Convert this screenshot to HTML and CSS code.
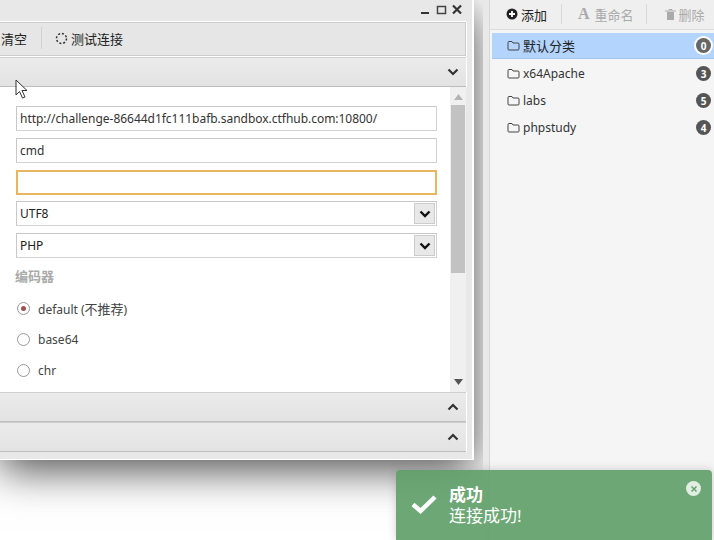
FILE: index.html
```html
<!DOCTYPE html>
<html lang="zh">
<head>
<meta charset="utf-8">
<title>连接</title>
<link rel="stylesheet" href="styles.css">
</head>
<body>
<main class="workspace">
  <section class="window">
    <div class="titlebar">
      <svg class="winicon" width="44" height="12" viewBox="0 0 44 12"><path d="M1 9h8" stroke="#333" stroke-width="2"/><path d="M17.500 2.500h8v7h-8z" fill="none" stroke="#444" stroke-width="1.500"/><path d="M33 1.500l8 8M41 1.500l-8 8" stroke="#333" stroke-width="2.200"/></svg>
    </div>
    <div class="toolbar">
      <span class="tool">清空</span>
      <span class="sep"></span>
      <span class="tool">
        <svg width="13" height="13" viewBox="0 0 13 13"><circle cx="6.500" cy="6.500" r="5" fill="none" stroke="#333" stroke-width="1.500" stroke-dasharray="2 1.900"/></svg>
        测试连接
      </span>
    </div>
    <div class="acc acc-open">
      <svg class="chev" width="12" height="8" viewBox="0 0 12 8"><path d="M1.500 1.500L6 6l4.500-4.500" fill="none" stroke="#333" stroke-width="2.200"/></svg>
    </div>
    <div class="body">
      <div class="form">
        <div class="field">http://challenge-86644d1fc111bafb.sandbox.ctfhub.com:10800/</div>
        <div class="field">cmd</div>
        <div class="field focus"></div>
        <div class="field select">UTF8<span class="selbtn"><svg width="12" height="8" viewBox="0 0 12 8"><path d="M1.500 1.500L6 6l4.500-4.500" fill="none" stroke="#111" stroke-width="2.400"/></svg></span></div>
        <div class="field select">PHP<span class="selbtn"><svg width="12" height="8" viewBox="0 0 12 8"><path d="M1.500 1.500L6 6l4.500-4.500" fill="none" stroke="#111" stroke-width="2.400"/></svg></span></div>
        <div class="label">编码器</div>
        <div class="radio"><span class="dot on"></span><span>default (<span class="cjk">不推荐</span>)</span></div>
        <div class="radio"><span class="dot"></span>base64</div>
        <div class="radio"><span class="dot"></span>chr</div>
      </div>
      <div class="scroll">
        <svg width="9" height="6" viewBox="0 0 9 6"><path d="M4.500 0L9 6H0z" fill="#b4b4b4"/></svg>
        <div class="thumb"></div>
        <svg class="down" width="9" height="6" viewBox="0 0 9 6"><path d="M0 0h9L4.500 6z" fill="#555"/></svg>
      </div>
    </div>
    <div class="acc">
      <svg class="chev" width="12" height="8" viewBox="0 0 12 8"><path d="M1.500 6.500L6 2l4.500 4.500" fill="none" stroke="#333" stroke-width="2.200"/></svg>
    </div>
    <div class="acc">
      <svg class="chev" width="12" height="8" viewBox="0 0 12 8"><path d="M1.500 6.500L6 2l4.500 4.500" fill="none" stroke="#333" stroke-width="2.200"/></svg>
    </div>
  </section>
  <svg class="cursor" width="14" height="21" viewBox="0 0 14 21"><path d="M1 1v15l3.500-3.500L7.500 19l2.500-1-3-6.500h5z" fill="#fff" stroke="#333" stroke-width="1"/></svg>
</main>
<div class="gutter"></div>
<aside class="side">
  <div class="sidebar-tools">
    <span class="stool dark"><svg width="12" height="12" viewBox="0 0 12 12"><circle cx="6" cy="6" r="5.500" fill="#222"/><path d="M6 3v6M3 6h6" stroke="#fff" stroke-width="1.800"/></svg>添加</span>
    <span class="ssep sep-a"></span>
    <span class="stool rename"><b class="aicon">A</b>重命名</span>
    <span class="ssep sep-b"></span>
    <span class="stool"><svg width="11" height="11" viewBox="0 0 11 11"><path d="M0 2h11M4 1.500V.5h3v1" stroke="#aaa" fill="none"/><path d="M2 3h7v8H2z" fill="#aaa"/></svg>删除</span>
  </div>
  <ul class="list">
    <li class="active"><svg class="folder" width="13" height="11" viewBox="0 0 13 11"><path d="M1 9V2.500q0-1 1-1h3l1 1.500h5q1 0 1 1V9q0 1-1 1H2q-1 0-1-1z" fill="none" stroke="#444"/></svg><span class="name cjk">默认分类</span><span class="badge">0</span></li>
    <li><svg class="folder" width="13" height="11" viewBox="0 0 13 11"><path d="M1 9V2.500q0-1 1-1h3l1 1.500h5q1 0 1 1V9q0 1-1 1H2q-1 0-1-1z" fill="none" stroke="#444"/></svg><span class="name">x64Apache</span><span class="badge">3</span></li>
    <li><svg class="folder" width="13" height="11" viewBox="0 0 13 11"><path d="M1 9V2.500q0-1 1-1h3l1 1.500h5q1 0 1 1V9q0 1-1 1H2q-1 0-1-1z" fill="none" stroke="#444"/></svg><span class="name">labs</span><span class="badge">5</span></li>
    <li><svg class="folder" width="13" height="11" viewBox="0 0 13 11"><path d="M1 9V2.500q0-1 1-1h3l1 1.500h5q1 0 1 1V9q0 1-1 1H2q-1 0-1-1z" fill="none" stroke="#444"/></svg><span class="name">phpstudy</span><span class="badge">4</span></li>
  </ul>
</aside>
<div class="toast">
  <svg class="check" width="26" height="20" viewBox="0 0 26 20"><path d="M2 10.500l7.500 6.500L24 3" fill="none" stroke="#fff" stroke-width="4.500"/></svg>
  <div class="toast-text">
    <div class="toast-title">成功</div>
    <div class="toast-msg">连接成功!</div>
  </div>
  <span class="toast-close"><svg width="8" height="8" viewBox="0 0 8 8"><path d="M1.500 1.500l5 5M6.500 1.500l-5 5" stroke="#6a9f70" stroke-width="1.500"/></svg></span>
</div>
</body>
</html>
```

FILE: styles.css
```css
* { box-sizing: border-box; }
html, body { margin: 0; height: 100%; }
body {
  width: 714px;
  height: 540px;
  overflow: hidden;
  display: flex;
  position: relative;
  background: #fff;
  font-family: "Noto Sans", "Open Sans", "Noto Sans CJK SC", sans-serif;
  font-size: 12px;
  color: #333;
}
.cjk { font-size: 13px; }
.workspace {
  width: 483px;
  flex: none;
  position: relative;
  overflow: hidden;
  background: #fff;
}
.window {
  width: 474px;
  height: 460px;
  background: #e8e8e8;
  border-right: 2px solid #fff;
  border-bottom: 1px solid #fff;
  box-shadow: 0 10px 40px rgba(0, 0, 0, .7);
  display: flex;
  flex-direction: column;
  padding-right: 6px;
}
.titlebar {
  height: 22px;
  flex: none;
  display: flex;
  justify-content: flex-end;
  align-items: center;
  padding: 0 4px 9px 0;
  margin-right: -6px;
}
.winicon { flex: none; margin-top: 6px; margin-right: 4px; }
.toolbar {
  height: 34px;
  flex: none;
  display: flex;
  align-items: center;
  gap: 14px;
  padding: 0 0 2px 1px;
  background: #e6e6e6;
  border: 1px solid #ccc;
  border-left: 0;
  box-shadow: 0 -1px 0 #fff, 0 1px 0 #fff, 1px 0 0 #fff;
  color: #222;
  font-size: 13px;
}
.tool { display: flex; align-items: center; gap: 3px; }
.sep { width: 1px; height: 22px; background: #d2d2d2; margin-right: -1px; }
.acc {
  height: 30px;
  flex: none;
  display: flex;
  justify-content: flex-end;
  align-items: center;
  padding-right: 7px;
  background: linear-gradient(#ebebeb, #e3e3e3);
  border-bottom: 1px solid #bdbdbd;
  border-top: 1px solid #cfcfcf;
  box-shadow: 1px 0 0 #fff;
}
.acc-open { margin-top: 1px; }
.body {
  height: 305px;
  flex: none;
  display: flex;
  background: #fff;
  overflow: hidden;
}
.form {
  flex: 1;
  min-width: 0;
  padding: 19px 13px 0 16px;
}
.field {
  height: 25px;
  margin-bottom: 7px;
  border: 1px solid #c8c8c8;
  border-color: #c8c8c8 #d2d2d2 #d2d2d2 #c8c8c8;
  padding-left: 3px;
  display: flex;
  align-items: center;
  justify-content: space-between;
  color: #333;
  font-size: 12px;
  letter-spacing: -.03px;
}
.focus { border: 2px solid #e8b560; margin-bottom: 6px; }
.select { padding-right: 1px; margin-bottom: 7px; color: #222; }
.selbtn {
  width: 21px;
  height: 21px;
  background: #e8e8e8;
  border: 1px solid #ccc;
  display: flex;
  align-items: center;
  justify-content: center;
}
.label {
  height: 21px;
  margin: 2px 0 7px -1px;
  color: #aaa;
  font-weight: 700;
  font-size: 13px;
  display: flex;
  align-items: center;
}
.radio {
  height: 31px;
  display: flex;
  align-items: center;
  gap: 8px;
  padding-left: 1px;
  color: #444;
  font-size: 12px;
}
.dot {
  width: 13px;
  height: 13px;
  border-radius: 50%;
  border: 1px solid #999;
  background: #fff;
  flex: none;
  display: flex;
  align-items: center;
  justify-content: center;
}
.on::after {
  content: "";
  width: 5px;
  height: 5px;
  border-radius: 50%;
  background: #a05050;
}
.scroll {
  width: 16px;
  flex: none;
  background: #f0f0f0;
  display: flex;
  flex-direction: column;
  align-items: center;
  padding-top: 7px;
}
.thumb {
  width: 14px;
  height: 168px;
  margin-top: 5px;
  background: #c2c2c2;
}
.down { margin-top: auto; margin-bottom: 7px; }
.cursor {
  position: absolute;
  left: 15px;
  top: 79px;
}
.gutter {
  width: 6px;
  flex: none;
  background: #e9e9e9;
}
.side {
  flex: 1;
  min-width: 0;
  border-left: 1px solid #d8d8d8;
  background: #f5f5f5;
}
.sidebar-tools {
  height: 30px;
  display: flex;
  align-items: center;
  padding: 0 0 1px 16px;
  background: #efefef;
  border-bottom: 1px solid #ddd;
  color: #aaa;
  font-size: 13px;
}
.stool { display: flex; align-items: center; gap: 3px; white-space: nowrap; }
.rename { gap: 5px; }
.dark { color: #222; }
.aicon { font-family: "Liberation Serif", serif; font-size: 16px; color: #aaa; }
.ssep { width: 1px; height: 20px; background: #d8d8d8; flex: none; }
.sep-a { margin: 0 16px 0 14px; }
.sep-b { margin: 0 18px 0 12px; }
.list { list-style: none; margin: 3px 0 0; padding: 0 0 0 2px; }
.list li {
  height: 27px;
  display: flex;
  align-items: center;
  padding-left: 15px;
  gap: 3px;
  color: #333;
  font-size: 12px;
}
.list .active {
  height: 26px;
  margin-bottom: 1px;
  background: #b3d4fc;
  border-bottom: 1px solid #a5c5ea;
  color: #222;
}
.folder { flex: none; }
.name { flex: 1; min-width: 0; }
.badge {
  width: 15px;
  height: 15px;
  flex: none;
  border-radius: 50%;
  background: #555;
  color: #fff;
  font-size: 10px;
  font-weight: 700;
  display: flex;
  align-items: center;
  justify-content: center;
  margin-right: 3px;
}
.active .badge { background: #666; box-shadow: 0 0 0 2px #fff; }
.toast {
  position: absolute;
  left: 396px;
  top: 470px;
  width: 316px;
  height: 70px;
  background: rgba(95, 160, 105, .92);
  border-radius: 4px 4px 0 0;
  box-shadow: 0 0 8px rgba(120, 100, 120, .3);
  color: #fff;
  display: flex;
  align-items: flex-start;
  padding: 14px 0 0 15px;
  gap: 12px;
}
.check { flex: none; margin-top: 10px; }
.toast-text { font-size: 17px; line-height: 21px; }
.toast-title { font-weight: 700; }
.toast-msg { font-weight: 400; }
.toast-close {
  position: absolute;
  right: 11px;
  top: 11px;
  width: 15px;
  height: 15px;
  border-radius: 50%;
  background: #dfeee0;
  display: flex;
  align-items: center;
  justify-content: center;
}
```
